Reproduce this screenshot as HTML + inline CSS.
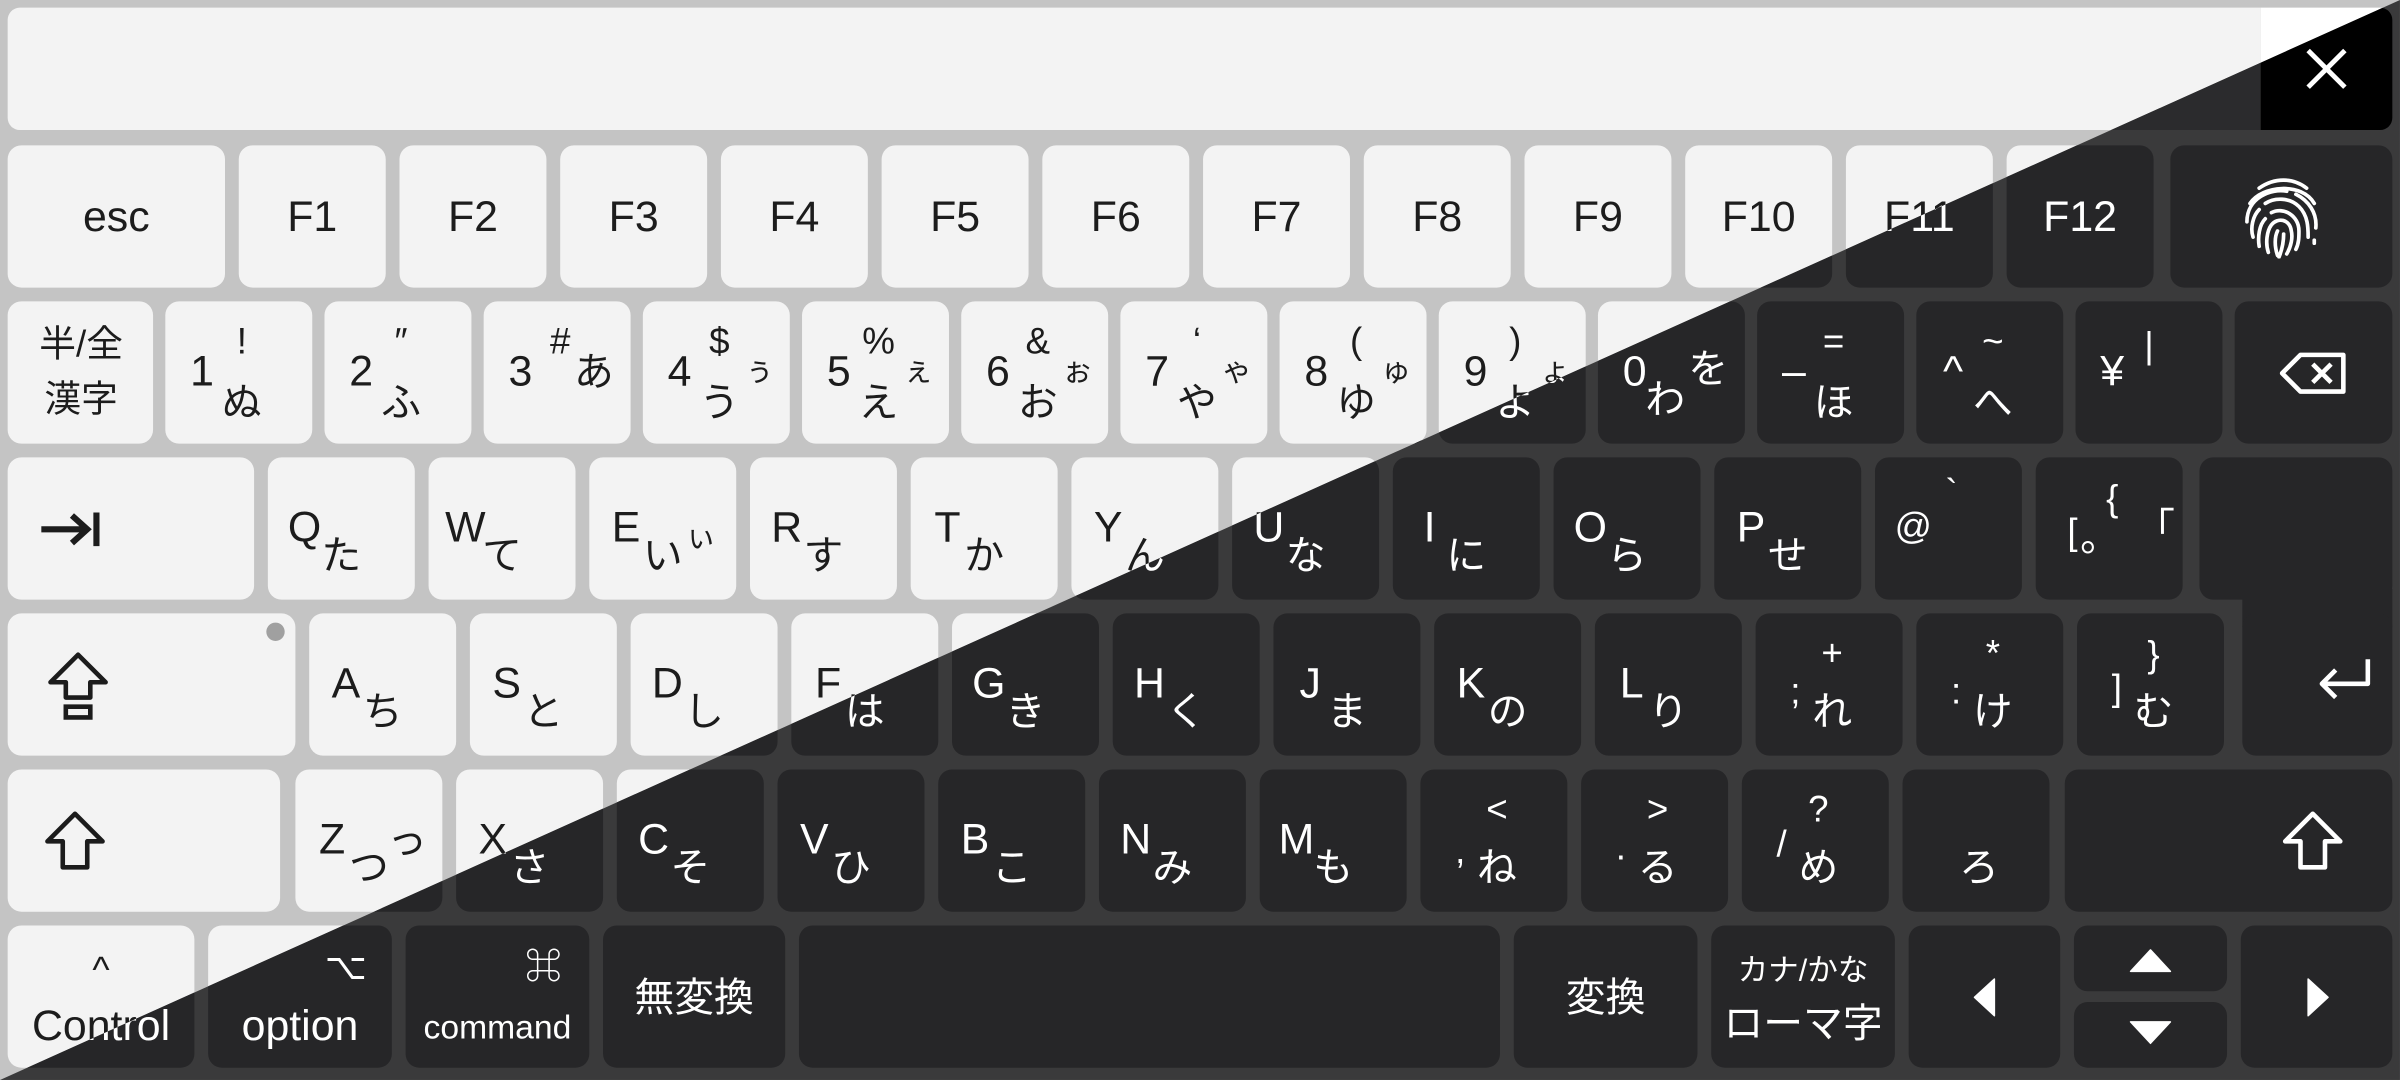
<!DOCTYPE html>
<html><head><meta charset="utf-8"><style>
html,body{margin:0;padding:0;width:2400px;height:1080px;overflow:hidden;background:#c4c4c4}
#root{position:absolute;left:0;top:0;width:1568px;height:706px;transform:scale(1.5306,1.5297);transform-origin:0 0}
.layer{position:absolute;left:0;top:0;width:1568px;height:706px;font-family:"Liberation Sans","Noto Sans CJK JP",sans-serif}
.L{background:#c4c4c4;color:#1c1c1c}
.D{background:#3a3a3b;color:#fff;clip-path:polygon(100% 0,100% 100%,0 100%)}
.L .k,.L .fill{background:#f3f3f3}.D .k,.D .fill{background:#262628}
.bar{position:absolute;left:5px;top:5px;width:1472px;height:80px;border-radius:8px 0 0 8px}
.L .bar{background:#f3f3f3}.D .bar{background:#2b2b2d}
.x{position:absolute;left:1477px;top:5px;width:86px;height:80px;border-radius:0 8px 8px 0}
.L .x{background:#fff}.D .x{background:#000}
.k{position:absolute;width:96px;height:93px;border-radius:9px}
.fill{position:absolute}
.r1{top:95px}.r2{top:197px}.r3{top:299px}.r4{top:401px}.r5{top:503px}.r6{top:605px}
.k i{position:absolute;font-style:normal;transform:translate(-50%,-50%);white-space:nowrap;line-height:1}
.a{font-size:28px}.s{font-size:24px}.j{font-size:26px}.m{font-size:20px}
.n{left:24px;top:46px}.y{left:50px;top:27px}.b{left:50px;top:66px}.c{left:76px;top:46px}
.l{left:24px;top:46px}.h{left:48px;top:64px}.cc{left:73px;top:53px}
.ctr{left:50%;top:50%}
svg{position:absolute}
</style></head><body><div id="root">

<div class="layer L">
<div class="bar"></div><div class="x"></div>
<div class="k r1" style="left:5px;width:142px"><i class="a ctr">esc</i></div>
<div class="k r1" style="left:156px"><i class="a ctr">F1</i></div>
<div class="k r1" style="left:261px"><i class="a ctr">F2</i></div>
<div class="k r1" style="left:366px"><i class="a ctr">F3</i></div>
<div class="k r1" style="left:471px"><i class="a ctr">F4</i></div>
<div class="k r1" style="left:576px"><i class="a ctr">F5</i></div>
<div class="k r1" style="left:681px"><i class="a ctr">F6</i></div>
<div class="k r1" style="left:786px"><i class="a ctr">F7</i></div>
<div class="k r1" style="left:891px"><i class="a ctr">F8</i></div>
<div class="k r1" style="left:996px"><i class="a ctr">F9</i></div>
<div class="k r1" style="left:1101px"><i class="a ctr">F10</i></div>
<div class="k r1" style="left:1206px"><i class="a ctr">F11</i></div>
<div class="k r1" style="left:1311px"><i class="a ctr">F12</i></div>
<div class="k r1" style="left:1418px;width:145px"></div>

<div class="k r2" style="left:5px;width:95px"><i class="s" style="left:48px;top:29px;font-size:24px">半/全</i><i class="s" style="left:48px;top:65px;font-size:24px">漢字</i></div>
<div class="k r2" style="left:108px"><i class="a n">1</i><i class="s y">!</i><i class="j b">ぬ</i></div>
<div class="k r2" style="left:212px"><i class="a n">2</i><i class="s y">″</i><i class="j b">ふ</i></div>
<div class="k r2" style="left:316px"><i class="a n">3</i><i class="s y">#</i><i class="j" style="left:72px;top:46px">あ</i></div>
<div class="k r2" style="left:420px"><i class="a n">4</i><i class="s y">$</i><i class="j b">う</i><i class="m c">ぅ</i></div>
<div class="k r2" style="left:524px"><i class="a n">5</i><i class="s y">%</i><i class="j b">え</i><i class="m c">ぇ</i></div>
<div class="k r2" style="left:628px"><i class="a n">6</i><i class="s y">&amp;</i><i class="j b">お</i><i class="m c">ぉ</i></div>
<div class="k r2" style="left:732px"><i class="a n">7</i><i class="s y">‘</i><i class="j b">や</i><i class="m c">ゃ</i></div>
<div class="k r2" style="left:836px"><i class="a n">8</i><i class="s y">(</i><i class="j b">ゆ</i><i class="m c">ゅ</i></div>
<div class="k r2" style="left:940px"><i class="a n">9</i><i class="s y">)</i><i class="j b">よ</i><i class="m c">ょ</i></div>
<div class="k r2" style="left:1044px"><i class="a n">0</i><i class="j" style="left:44px;top:64px">わ</i><i class="j" style="left:72px;top:44px">を</i></div>
<div class="k r2" style="left:1148px"><i class="a n">–</i><i class="s y">=</i><i class="j b">ほ</i></div>
<div class="k r2" style="left:1252px"><i class="a n">^</i><i class="s y">~</i><i class="j b">へ</i></div>
<div class="k r2" style="left:1356px"><i class="a n">¥</i><i class="s" style="left:48px;top:30px">|</i></div>
<div class="k r2" style="left:1460px;width:103px"><svg style="left:28px;top:32px" width="46" height="30" viewBox="0 0 46 30"><path d="M15 3H43V27H15L3 15Z" fill="none" stroke="currentColor" stroke-width="3" stroke-linejoin="round"/><path d="M23 9L35 21M35 9L23 21" stroke="currentColor" stroke-width="3"/></svg></div>

<div class="k r3" style="left:5px;width:161px"><svg style="left:20px;top:34px" width="42" height="26" viewBox="0 0 42 26"><path d="M2 13H32M22 4L32 13L22 22M38 2V24" fill="none" stroke="currentColor" stroke-width="4"/></svg></div>
<div class="k r3" style="left:175px"><i class="a l">Q</i><i class="j h">た</i></div>
<div class="k r3" style="left:280px"><i class="a l">W</i><i class="j h">て</i></div>
<div class="k r3" style="left:385px"><i class="a l">E</i><i class="j h">い</i><i class="m cc">ぃ</i></div>
<div class="k r3" style="left:490px"><i class="a l">R</i><i class="j h">す</i></div>
<div class="k r3" style="left:595px"><i class="a l">T</i><i class="j h">か</i></div>
<div class="k r3" style="left:700px"><i class="a l">Y</i><i class="j h">ん</i></div>
<div class="k r3" style="left:805px"><i class="a l">U</i><i class="j h">な</i></div>
<div class="k r3" style="left:910px"><i class="a l">I</i><i class="j h">に</i></div>
<div class="k r3" style="left:1015px"><i class="a l">O</i><i class="j h">ら</i></div>
<div class="k r3" style="left:1120px"><i class="a l">P</i><i class="j h">せ</i></div>
<div class="k r3" style="left:1225px"><i class="s" style="left:25px;top:46px">@</i><i class="s" style="left:50px;top:24px">`</i></div>
<div class="k r3" style="left:1330px"><i class="s" style="left:24px;top:50px">[</i><i class="s" style="left:50px;top:28px">{</i><i class="j" style="left:42px;top:52px">。</i><i class="j" style="left:78px;top:46px">「</i></div>
<div class="k r3" style="left:1437px;width:126px"></div>
<div class="fill" style="left:1465px;top:385px;width:98px;height:25px"></div>

<div class="k r4" style="left:5px;width:188px"><svg style="left:24px;top:24px" width="44" height="48" viewBox="0 0 44 48"><path d="M22 3L40 21H30V31H14V21H4Z" fill="none" stroke="currentColor" stroke-width="3" stroke-linejoin="round"/><path d="M14 37H30V44H14Z" fill="none" stroke="currentColor" stroke-width="3"/></svg><div style="position:absolute;left:169px;top:6px;width:12px;height:12px;border-radius:6px;background:#a0a0a0"></div></div>
<div class="k r4" style="left:202px"><i class="a l">A</i><i class="j h">ち</i></div>
<div class="k r4" style="left:307px"><i class="a l">S</i><i class="j h">と</i></div>
<div class="k r4" style="left:412px"><i class="a l">D</i><i class="j h">し</i></div>
<div class="k r4" style="left:517px"><i class="a l">F</i><i class="j h">は</i></div>
<div class="k r4" style="left:622px"><i class="a l">G</i><i class="j h">き</i></div>
<div class="k r4" style="left:727px"><i class="a l">H</i><i class="j h">く</i></div>
<div class="k r4" style="left:832px"><i class="a l">J</i><i class="j h">ま</i></div>
<div class="k r4" style="left:937px"><i class="a l">K</i><i class="j h">の</i></div>
<div class="k r4" style="left:1042px"><i class="a l">L</i><i class="j h">り</i></div>
<div class="k r4" style="left:1147px"><i class="s" style="left:26px;top:52px">;</i><i class="s y">+</i><i class="j" style="left:50px;top:64px">れ</i></div>
<div class="k r4" style="left:1252px"><i class="s" style="left:26px;top:52px">:</i><i class="s y">*</i><i class="j" style="left:50px;top:64px">け</i></div>
<div class="k r4" style="left:1357px"><i class="s" style="left:26px;top:50px">]</i><i class="s" style="left:50px;top:28px">}</i><i class="j" style="left:50px;top:64px">む</i></div>
<div class="k r4" style="left:1465px;width:98px"><svg style="left:46px;top:26px" width="40" height="34" viewBox="0 0 40 34"><path d="M36 4V20H6M15 11L6 20L15 29" fill="none" stroke="currentColor" stroke-width="3" stroke-linejoin="round"/></svg></div>

<div class="k r5" style="left:5px;width:178px"><svg style="left:22px;top:26px" width="44" height="42" viewBox="0 0 44 42"><path d="M22 3L40 21H30V38H14V21H4Z" fill="none" stroke="currentColor" stroke-width="3" stroke-linejoin="round"/></svg></div>
<div class="k r5" style="left:193px"><i class="a l">Z</i><i class="j h">つ</i><i class="j" style="left:73px;top:46px">っ</i></div>
<div class="k r5" style="left:298px"><i class="a l">X</i><i class="j h">さ</i></div>
<div class="k r5" style="left:403px"><i class="a l">C</i><i class="j h">そ</i></div>
<div class="k r5" style="left:508px"><i class="a l">V</i><i class="j h">ひ</i></div>
<div class="k r5" style="left:613px"><i class="a l">B</i><i class="j h">こ</i></div>
<div class="k r5" style="left:718px"><i class="a l">N</i><i class="j h">み</i></div>
<div class="k r5" style="left:823px"><i class="a l">M</i><i class="j h">も</i></div>
<div class="k r5" style="left:928px"><i class="s" style="left:26px;top:54px">,</i><i class="s y">&lt;</i><i class="j" style="left:50px;top:64px">ね</i></div>
<div class="k r5" style="left:1033px"><i class="s" style="left:26px;top:52px">.</i><i class="s y">&gt;</i><i class="j" style="left:50px;top:64px">る</i></div>
<div class="k r5" style="left:1138px"><i class="s" style="left:26px;top:50px">/</i><i class="s y">?</i><i class="j" style="left:50px;top:64px">め</i></div>
<div class="k r5" style="left:1243px"><i class="j" style="left:50px;top:64px">ろ</i></div>
<div class="k r5" style="left:1349px;width:214px"><svg style="left:140px;top:26px" width="44" height="42" viewBox="0 0 44 42"><path d="M22 3L40 21H30V38H14V21H4Z" fill="none" stroke="currentColor" stroke-width="3" stroke-linejoin="round"/></svg></div>

<div class="k r6" style="left:5px;width:122px"><i class="s" style="left:61px;top:30px">^</i><i class="a" style="left:61px;top:66px">Control</i></div>
<div class="k r6" style="left:136px;width:120px"><i class="s" style="left:90px;top:28px">⌥</i><i class="a" style="left:60px;top:66px">option</i></div>
<div class="k r6" style="left:265px;width:120px"><i class="s" style="left:90px;top:28px">⌘</i><i class="s" style="left:60px;top:67px;font-size:22px">command</i></div>
<div class="k r6" style="left:394px;width:119px"><i class="j ctr">無変換</i></div>
<div class="k r6" style="left:522px;width:458px"></div>
<div class="k r6" style="left:989px;width:120px"><i class="j ctr">変換</i></div>
<div class="k r6" style="left:1118px;width:120px"><i class="s" style="left:60px;top:30px;font-size:20px">カナ/かな</i><i class="j" style="left:60px;top:64px">ローマ字</i></div>
<div class="k r6" style="left:1247px;width:99px"><svg style="left:42px;top:34px" width="16" height="26" viewBox="0 0 16 26"><path d="M14 1V25L1 13Z" fill="currentColor" stroke="currentColor" stroke-linejoin="round"/></svg></div>
<div class="k r6" style="left:1355px;width:100px;height:43px"><svg style="left:36px;top:15px" width="28" height="16" viewBox="0 0 28 16"><path d="M1 15H27L14 1Z" fill="currentColor" stroke="currentColor" stroke-linejoin="round"/></svg></div>
<div class="k" style="left:1355px;top:655px;width:100px;height:43px"><svg style="left:36px;top:12px" width="28" height="16" viewBox="0 0 28 16"><path d="M1 1H27L14 15Z" fill="currentColor" stroke="currentColor" stroke-linejoin="round"/></svg></div>
<div class="k r6" style="left:1464px;width:99px"><svg style="left:42px;top:34px" width="16" height="26" viewBox="0 0 16 26"><path d="M2 1V25L15 13Z" fill="currentColor" stroke="currentColor" stroke-linejoin="round"/></svg></div>
</div>

<div class="layer D">
<div class="bar"></div><div class="x"><svg style="left:29px;top:26px" width="28" height="28" viewBox="0 0 28 28"><path d="M2 2L26 26M26 2L2 26" stroke="#fff" stroke-width="3.2"/></svg></div>
<div class="k r1" style="left:5px;width:142px"><i class="a ctr">esc</i></div>
<div class="k r1" style="left:156px"><i class="a ctr">F1</i></div>
<div class="k r1" style="left:261px"><i class="a ctr">F2</i></div>
<div class="k r1" style="left:366px"><i class="a ctr">F3</i></div>
<div class="k r1" style="left:471px"><i class="a ctr">F4</i></div>
<div class="k r1" style="left:576px"><i class="a ctr">F5</i></div>
<div class="k r1" style="left:681px"><i class="a ctr">F6</i></div>
<div class="k r1" style="left:786px"><i class="a ctr">F7</i></div>
<div class="k r1" style="left:891px"><i class="a ctr">F8</i></div>
<div class="k r1" style="left:996px"><i class="a ctr">F9</i></div>
<div class="k r1" style="left:1101px"><i class="a ctr">F10</i></div>
<div class="k r1" style="left:1206px"><i class="a ctr">F11</i></div>
<div class="k r1" style="left:1311px"><i class="a ctr">F12</i></div>
<div class="k r1" style="left:1418px;width:145px"><svg style="left:46px;top:20px" width="54" height="54" viewBox="0 0 54 54" fill="none" stroke="#fff" stroke-width="2.4" stroke-linecap="round"><path d="M12 8C22 1 34 1 43 8"/><path d="M6 18C14 6 40 4 48 18"/><path d="M4 30C4 14 20 8 30 10M36 12C44 16 50 24 49 34"/><path d="M8 40C6 34 8 26 12 22M16 18C22 14 32 14 38 20C44 26 44 34 44 40"/><path d="M12 46C11 40 12 32 16 28M20 24C28 20 38 26 38 36C38 40 38 44 36 48"/><path d="M18 50C16 44 17 36 20 32C24 27 32 28 33 36C34 40 33 46 30 51"/><path d="M24 52C22 46 22 40 24 36M28 38C28 44 27 48 25 53"/><path d="M48 42L48 44"/></svg></div>

<div class="k r2" style="left:5px;width:95px"><i class="s" style="left:48px;top:29px;font-size:24px">半/全</i><i class="s" style="left:48px;top:65px;font-size:24px">漢字</i></div>
<div class="k r2" style="left:108px"><i class="a n">1</i><i class="s y">!</i><i class="j b">ぬ</i></div>
<div class="k r2" style="left:212px"><i class="a n">2</i><i class="s y">″</i><i class="j b">ふ</i></div>
<div class="k r2" style="left:316px"><i class="a n">3</i><i class="s y">#</i><i class="j" style="left:72px;top:46px">あ</i></div>
<div class="k r2" style="left:420px"><i class="a n">4</i><i class="s y">$</i><i class="j b">う</i><i class="m c">ぅ</i></div>
<div class="k r2" style="left:524px"><i class="a n">5</i><i class="s y">%</i><i class="j b">え</i><i class="m c">ぇ</i></div>
<div class="k r2" style="left:628px"><i class="a n">6</i><i class="s y">&amp;</i><i class="j b">お</i><i class="m c">ぉ</i></div>
<div class="k r2" style="left:732px"><i class="a n">7</i><i class="s y">‘</i><i class="j b">や</i><i class="m c">ゃ</i></div>
<div class="k r2" style="left:836px"><i class="a n">8</i><i class="s y">(</i><i class="j b">ゆ</i><i class="m c">ゅ</i></div>
<div class="k r2" style="left:940px"><i class="a n">9</i><i class="s y">)</i><i class="j b">よ</i><i class="m c">ょ</i></div>
<div class="k r2" style="left:1044px"><i class="a n">0</i><i class="j" style="left:44px;top:64px">わ</i><i class="j" style="left:72px;top:44px">を</i></div>
<div class="k r2" style="left:1148px"><i class="a n">–</i><i class="s y">=</i><i class="j b">ほ</i></div>
<div class="k r2" style="left:1252px"><i class="a n">^</i><i class="s y">~</i><i class="j b">へ</i></div>
<div class="k r2" style="left:1356px"><i class="a n">¥</i><i class="s" style="left:48px;top:30px">|</i></div>
<div class="k r2" style="left:1460px;width:103px"><svg style="left:28px;top:32px" width="46" height="30" viewBox="0 0 46 30"><path d="M15 3H43V27H15L3 15Z" fill="none" stroke="currentColor" stroke-width="3" stroke-linejoin="round"/><path d="M23 9L35 21M35 9L23 21" stroke="currentColor" stroke-width="3"/></svg></div>

<div class="k r3" style="left:5px;width:161px"><svg style="left:20px;top:34px" width="42" height="26" viewBox="0 0 42 26"><path d="M2 13H32M22 4L32 13L22 22M38 2V24" fill="none" stroke="currentColor" stroke-width="4"/></svg></div>
<div class="k r3" style="left:175px"><i class="a l">Q</i><i class="j h">た</i></div>
<div class="k r3" style="left:280px"><i class="a l">W</i><i class="j h">て</i></div>
<div class="k r3" style="left:385px"><i class="a l">E</i><i class="j h">い</i><i class="m cc">ぃ</i></div>
<div class="k r3" style="left:490px"><i class="a l">R</i><i class="j h">す</i></div>
<div class="k r3" style="left:595px"><i class="a l">T</i><i class="j h">か</i></div>
<div class="k r3" style="left:700px"><i class="a l">Y</i><i class="j h">ん</i></div>
<div class="k r3" style="left:805px"><i class="a l">U</i><i class="j h">な</i></div>
<div class="k r3" style="left:910px"><i class="a l">I</i><i class="j h">に</i></div>
<div class="k r3" style="left:1015px"><i class="a l">O</i><i class="j h">ら</i></div>
<div class="k r3" style="left:1120px"><i class="a l">P</i><i class="j h">せ</i></div>
<div class="k r3" style="left:1225px"><i class="s" style="left:25px;top:46px">@</i><i class="s" style="left:50px;top:24px">`</i></div>
<div class="k r3" style="left:1330px"><i class="s" style="left:24px;top:50px">[</i><i class="s" style="left:50px;top:28px">{</i><i class="j" style="left:42px;top:52px">。</i><i class="j" style="left:78px;top:46px">「</i></div>
<div class="k r3" style="left:1437px;width:126px"></div>
<div class="fill" style="left:1465px;top:385px;width:98px;height:25px"></div>

<div class="k r4" style="left:5px;width:188px"><svg style="left:24px;top:24px" width="44" height="48" viewBox="0 0 44 48"><path d="M22 3L40 21H30V31H14V21H4Z" fill="none" stroke="currentColor" stroke-width="3" stroke-linejoin="round"/><path d="M14 37H30V44H14Z" fill="none" stroke="currentColor" stroke-width="3"/></svg></div>
<div class="k r4" style="left:202px"><i class="a l">A</i><i class="j h">ち</i></div>
<div class="k r4" style="left:307px"><i class="a l">S</i><i class="j h">と</i></div>
<div class="k r4" style="left:412px"><i class="a l">D</i><i class="j h">し</i></div>
<div class="k r4" style="left:517px"><i class="a l">F</i><i class="j h">は</i></div>
<div class="k r4" style="left:622px"><i class="a l">G</i><i class="j h">き</i></div>
<div class="k r4" style="left:727px"><i class="a l">H</i><i class="j h">く</i></div>
<div class="k r4" style="left:832px"><i class="a l">J</i><i class="j h">ま</i></div>
<div class="k r4" style="left:937px"><i class="a l">K</i><i class="j h">の</i></div>
<div class="k r4" style="left:1042px"><i class="a l">L</i><i class="j h">り</i></div>
<div class="k r4" style="left:1147px"><i class="s" style="left:26px;top:52px">;</i><i class="s y">+</i><i class="j" style="left:50px;top:64px">れ</i></div>
<div class="k r4" style="left:1252px"><i class="s" style="left:26px;top:52px">:</i><i class="s y">*</i><i class="j" style="left:50px;top:64px">け</i></div>
<div class="k r4" style="left:1357px"><i class="s" style="left:26px;top:50px">]</i><i class="s" style="left:50px;top:28px">}</i><i class="j" style="left:50px;top:64px">む</i></div>
<div class="k r4" style="left:1465px;width:98px"><svg style="left:46px;top:26px" width="40" height="34" viewBox="0 0 40 34"><path d="M36 4V20H6M15 11L6 20L15 29" fill="none" stroke="currentColor" stroke-width="3" stroke-linejoin="round"/></svg></div>

<div class="k r5" style="left:5px;width:178px"><svg style="left:22px;top:26px" width="44" height="42" viewBox="0 0 44 42"><path d="M22 3L40 21H30V38H14V21H4Z" fill="none" stroke="currentColor" stroke-width="3" stroke-linejoin="round"/></svg></div>
<div class="k r5" style="left:193px"><i class="a l">Z</i><i class="j h">つ</i><i class="j" style="left:73px;top:46px">っ</i></div>
<div class="k r5" style="left:298px"><i class="a l">X</i><i class="j h">さ</i></div>
<div class="k r5" style="left:403px"><i class="a l">C</i><i class="j h">そ</i></div>
<div class="k r5" style="left:508px"><i class="a l">V</i><i class="j h">ひ</i></div>
<div class="k r5" style="left:613px"><i class="a l">B</i><i class="j h">こ</i></div>
<div class="k r5" style="left:718px"><i class="a l">N</i><i class="j h">み</i></div>
<div class="k r5" style="left:823px"><i class="a l">M</i><i class="j h">も</i></div>
<div class="k r5" style="left:928px"><i class="s" style="left:26px;top:54px">,</i><i class="s y">&lt;</i><i class="j" style="left:50px;top:64px">ね</i></div>
<div class="k r5" style="left:1033px"><i class="s" style="left:26px;top:52px">.</i><i class="s y">&gt;</i><i class="j" style="left:50px;top:64px">る</i></div>
<div class="k r5" style="left:1138px"><i class="s" style="left:26px;top:50px">/</i><i class="s y">?</i><i class="j" style="left:50px;top:64px">め</i></div>
<div class="k r5" style="left:1243px"><i class="j" style="left:50px;top:64px">ろ</i></div>
<div class="k r5" style="left:1349px;width:214px"><svg style="left:140px;top:26px" width="44" height="42" viewBox="0 0 44 42"><path d="M22 3L40 21H30V38H14V21H4Z" fill="none" stroke="currentColor" stroke-width="3" stroke-linejoin="round"/></svg></div>

<div class="k r6" style="left:5px;width:122px"><i class="s" style="left:61px;top:30px">^</i><i class="a" style="left:61px;top:66px">Control</i></div>
<div class="k r6" style="left:136px;width:120px"><i class="s" style="left:90px;top:28px">⌥</i><i class="a" style="left:60px;top:66px">option</i></div>
<div class="k r6" style="left:265px;width:120px"><i class="s" style="left:90px;top:28px">⌘</i><i class="s" style="left:60px;top:67px;font-size:22px">command</i></div>
<div class="k r6" style="left:394px;width:119px"><i class="j ctr">無変換</i></div>
<div class="k r6" style="left:522px;width:458px"></div>
<div class="k r6" style="left:989px;width:120px"><i class="j ctr">変換</i></div>
<div class="k r6" style="left:1118px;width:120px"><i class="s" style="left:60px;top:30px;font-size:20px">カナ/かな</i><i class="j" style="left:60px;top:64px">ローマ字</i></div>
<div class="k r6" style="left:1247px;width:99px"><svg style="left:42px;top:34px" width="16" height="26" viewBox="0 0 16 26"><path d="M14 1V25L1 13Z" fill="currentColor" stroke="currentColor" stroke-linejoin="round"/></svg></div>
<div class="k r6" style="left:1355px;width:100px;height:43px"><svg style="left:36px;top:15px" width="28" height="16" viewBox="0 0 28 16"><path d="M1 15H27L14 1Z" fill="currentColor" stroke="currentColor" stroke-linejoin="round"/></svg></div>
<div class="k" style="left:1355px;top:655px;width:100px;height:43px"><svg style="left:36px;top:12px" width="28" height="16" viewBox="0 0 28 16"><path d="M1 1H27L14 15Z" fill="currentColor" stroke="currentColor" stroke-linejoin="round"/></svg></div>
<div class="k r6" style="left:1464px;width:99px"><svg style="left:42px;top:34px" width="16" height="26" viewBox="0 0 16 26"><path d="M2 1V25L15 13Z" fill="currentColor" stroke="currentColor" stroke-linejoin="round"/></svg></div>
</div>

</div></body></html>
